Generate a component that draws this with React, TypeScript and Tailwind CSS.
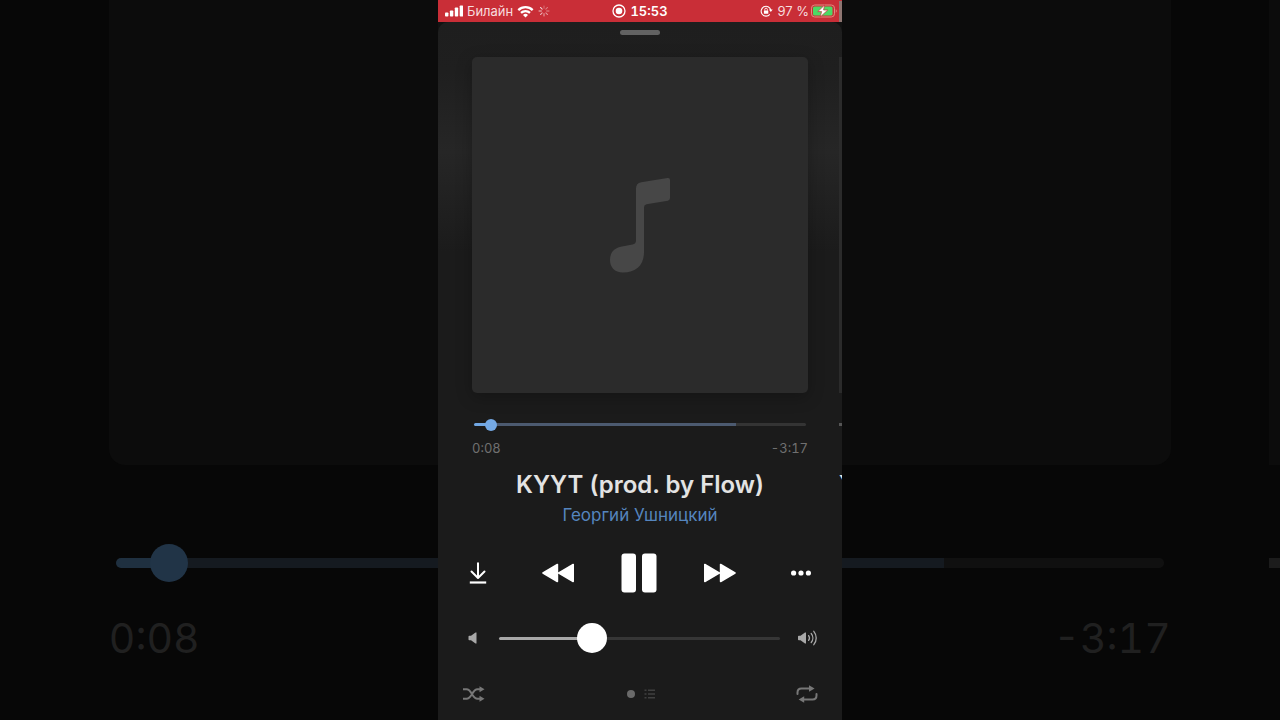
import { useState } from 'react'

const bars = [4, 6, 9, 11]
const spokes = [0, 45, 90, 135, 180, 225, 270, 315]

function StatusBar() {
  return (
    <header className="grid h-[22px] shrink-0 grid-cols-[1fr_auto_1fr] items-center bg-[#c92e37] pl-[7px] text-[13px] leading-4 text-white">
      <div className="flex items-center gap-1">
        <svg width="18" height="12" viewBox="0 0 18 12" fill="currentColor">
          {bars.map((h, i) => (
            <rect key={h} x={i * 4.9} y={11.5 - h} width="3.4" height={h} rx="0.8" />
          ))}
        </svg>
        <span className="text-[#f7dcde]">Билайн</span>
        <svg width="17" height="13" viewBox="0 0 17 13" fill="none" stroke="currentColor" strokeWidth="2.2">
          <path d="M1.3 5.1a10.2 10.2 0 0 1 14.4 0" />
          <path d="M4 7.9a6.4 6.4 0 0 1 9 0" />
          <path d="M8.5 12.4 6 9.9a3.6 3.6 0 0 1 5 0z" fill="currentColor" stroke="none" />
        </svg>
        <svg width="12" height="12" viewBox="0 0 12 12" stroke="currentColor" strokeWidth="1" strokeLinecap="round">
          {spokes.map((deg, i) => (
            <path key={deg} d="M6 1v2.4" transform={`rotate(${deg} 6 6)`} opacity={0.3 + i * 0.07} />
          ))}
        </svg>
      </div>

      <div className="flex items-center gap-1 pr-[7px] font-semibold">
        <svg width="14" height="14" viewBox="0 0 14 14">
          <circle cx="7" cy="7" r="6" fill="none" stroke="currentColor" strokeWidth="1.3" />
          <circle cx="7" cy="7" r="3.3" fill="currentColor" />
        </svg>
        <span className="tabular-nums">15:53</span>
      </div>

      <div className="flex items-center justify-end">
        <svg className="mr-1" width="13" height="12" viewBox="0 0 13 12" fill="none" stroke="currentColor">
          <path d="M9.8 9.4A4.9 4.9 0 1 1 10.8 5" strokeWidth="1.1" />
          <path d="M8.9 4.6h3.8l-1.9 2.5z" fill="currentColor" stroke="none" />
          <rect x="3.9" y="5.4" width="4.4" height="3.3" rx="0.5" fill="currentColor" stroke="none" />
          <path d="M4.8 5.6V4.5a1.3 1.3 0 0 1 2.6 0v1.1" strokeWidth="0.9" />
        </svg>
        <span className="mr-[2px] text-[#f7dcde]">97 %</span>
        <svg width="26" height="14" viewBox="0 0 26 14">
          <rect x="0.5" y="1" width="23" height="12" rx="3.2" fill="none" stroke="#e38a80" />
          <rect x="2" y="2.5" width="19.5" height="9" rx="1.6" fill="#4cd964" />
          <path d="M24.8 5.3v3.4a2 2 0 0 0 0-3.4z" fill="#e38a80" />
          <path d="M13.600 1 6.800 7.600h3.800L9.200 13 16.800 6h-4.200z" fill="#fff" stroke="#c92e37" strokeWidth="0.7" />
        </svg>
        <div className="ml-[2px] h-[21px] w-[3px] bg-[#8f7672]" />
      </div>
    </header>
  )
}

// The dimmed, enlarged player behind the phone
function Backdrop() {
  return (
    <div aria-hidden="true" className="col-start-1 row-start-1 flex gap-[98px] overflow-hidden pl-[8.5%]">
      <div className="w-[91%] max-w-[1062px] shrink-0">
        <div className="h-[465px] rounded-b-2xl bg-[#0c0c0c]" />
        <div className="px-[7px] pt-[93px]">
          <input
            type="range"
            tabIndex={-1}
            readOnly
            step="any"
            value={3.4}
            aria-label="Backdrop position"
            className="block h-[10px] w-full appearance-none rounded-full bg-[linear-gradient(to_right,#1f3040_5%,#151a20_5%,#151a20_79%,#101010_79%)] [&::-webkit-slider-thumb]:size-[38px] [&::-webkit-slider-thumb]:appearance-none [&::-webkit-slider-thumb]:rounded-full [&::-webkit-slider-thumb]:bg-[#213447]"
          />
        </div>
        <div className="flex justify-between pt-[46px] text-[41px] leading-[48px] text-[#202020] tabular-nums">
          <span>0:08</span>
          <span>-3:17</span>
        </div>
      </div>
      <div className="w-full shrink-0">
        <div className="h-[465px] bg-[#0c0c0c]" />
        <div className="mt-[93px] h-[10px] bg-[#1c1c1c]" />
      </div>
    </div>
  )
}

function Track() {
  const [position, setPosition] = useState(3.4)

  return (
    <section className="w-[336px] shrink-0">
      <div className="flex h-[336px] items-center justify-center rounded-[5px] bg-[#2b2b2b] shadow-[0_4px_16px_rgba(0,0,0,0.25)]">
        <svg width="62" height="96" viewBox="0 0 62 96" fill="#474747">
          <path d="M27 11.500q0-5.200 5.200-6.300L58.500 1Q61 .7 61 3V21q0 2.200-2.200 2.700L37.500 27.300q-2.500.5-2.500 3V75C35 88.500 27 95.500 14 95.500 5.500 95.500 1 90 1 83 1 75.500 5 71 13 69.500L23.500 67.500Q27 67 27 63.500Z" />
        </svg>
      </div>
      <div className="px-[2px] pt-[30px]">
        <input
          type="range"
          step="any"
          aria-label="Track position"
          value={position}
          onChange={(e) => setPosition(Number(e.target.value))}
          className="block h-[3px] w-full appearance-none rounded-full bg-[linear-gradient(to_right,#71a7e3_5%,#4c5a70_5%,#4c5a70_79%,#343434_79%)] [&::-webkit-slider-thumb]:size-3 [&::-webkit-slider-thumb]:appearance-none [&::-webkit-slider-thumb]:rounded-full [&::-webkit-slider-thumb]:bg-[#75aae6]"
        />
      </div>
      <div className="flex justify-between pt-[13px] text-[13px] leading-[18px] text-[#707070] tabular-nums">
        <span>0:08</span>
        <span>-3:17</span>
      </div>
      <h1 className="pt-3 text-center text-[24px] leading-8 font-semibold text-[#e3e3e3]">KYYT (prod. by Flow)</h1>
      <p className="pt-[2px] text-center text-[17px] leading-6 text-[#5585be]">
        <a href="#artist">Георгий Ушницкий</a>
      </p>
    </section>
  )
}

// Only the left edge of the following track shows at the side of the screen
function NextTrack() {
  return (
    <section className="w-[336px] shrink-0">
      <div className="h-[336px] bg-[#2b2b2b]" />
      <div className="mt-[30px] h-[3px] bg-[#555555]" />
      <h2 className="pt-[43px] text-[24px] leading-8 font-semibold text-[#e3e3e3]">Y</h2>
    </section>
  )
}

function Controls() {
  const [playing, setPlaying] = useState(true)

  return (
    <div className="flex h-10 items-center justify-between px-[31px] text-white">
      <button aria-label="Download">
        <svg width="18" height="22" viewBox="0 0 18 22" fill="none" stroke="currentColor" strokeWidth="2" strokeLinecap="round" strokeLinejoin="round">
          <path d="M9 1.200v14.500M2.500 9.500 9 16l6.500-6.500" />
          <path d="M0.800 20.500h16.400" strokeWidth="2.200" strokeLinecap="butt" />
        </svg>
      </button>
      <div className="flex items-center gap-[47px]">
        <button aria-label="Previous">
          <svg width="32" height="20" viewBox="0 0 32 20" fill="currentColor" stroke="currentColor" strokeWidth="1.6" strokeLinejoin="round">
            <path d="M1 10 15.400 1.500v17zM16.800 10 31.200 1.500v17z" />
          </svg>
        </button>
        <button aria-label={playing ? 'Pause' : 'Play'} onClick={() => setPlaying(!playing)}>
          <svg width="36" height="40" viewBox="0 0 36 40" fill="currentColor">
            {playing ? (
              <>
                <rect x="0.500" y="0.500" width="14.500" height="39" rx="3" />
                <rect x="21" y="0.500" width="14.500" height="39" rx="3" />
              </>
            ) : (
              <path d="M3 1 34 20 3 39z" />
            )}
          </svg>
        </button>
        <button aria-label="Next">
          <svg width="32" height="20" viewBox="0 0 32 20" fill="currentColor" stroke="currentColor" strokeWidth="1.6" strokeLinejoin="round">
            <path d="M31 10 16.600 1.500v17zM15.200 10 .800 1.500v17z" />
          </svg>
        </button>
      </div>
      <button aria-label="More">
        <svg width="20" height="6" viewBox="0 0 20 6" fill="currentColor">
          <circle cx="2.600" cy="3" r="2.600" />
          <circle cx="10" cy="3" r="2.600" />
          <circle cx="17.400" cy="3" r="2.600" />
        </svg>
      </button>
    </div>
  )
}

function Volume() {
  const [volume, setVolume] = useState(31)

  return (
    <div className="mt-[30px] flex h-[30px] items-center pr-6 pl-[30px] text-[#a8a8a8]">
      <svg className="mr-[22px] shrink-0" width="9" height="12" viewBox="0 0 9 12" fill="currentColor">
        <path d="M0.500 4.500q0-.8.8-.8H3L7.500.5h1v11h-1L3 8.300H1.300q-.8 0-.8-.8z" />
      </svg>
      <input
        type="range"
        aria-label="Volume"
        value={volume}
        onChange={(e) => setVolume(Number(e.target.value))}
        className="block h-[3px] min-w-0 flex-1 appearance-none rounded-full bg-[linear-gradient(to_right,#a8a8a8_33%,#363636_33%)] [&::-webkit-slider-thumb]:size-[30px] [&::-webkit-slider-thumb]:appearance-none [&::-webkit-slider-thumb]:rounded-full [&::-webkit-slider-thumb]:bg-white"
      />
      <svg className="ml-[18px] shrink-0" width="20" height="16" viewBox="0 0 20 16" fill="none" stroke="currentColor" strokeLinecap="round">
        <path d="M0 6.500q0-.8.8-.8H2.500L7 2.500h1v11H7L2.500 10.300H.8q-.8 0-.8-.8z" fill="currentColor" stroke="none" />
        <path d="M10.600 5.600a4 4 0 0 1 0 4.800M13.200 3.500a7 7 0 0 1 0 9M15.800 1.300a10.500 10.500 0 0 1 0 13.400" strokeWidth="1.300" />
      </svg>
    </div>
  )
}

function Footer() {
  return (
    <footer className="mt-[31px] flex h-5 items-center justify-between px-6 text-[#777777]">
      <button aria-label="Shuffle">
        <svg width="23" height="16" viewBox="0 0 23 16" fill="none" stroke="currentColor" strokeWidth="2" strokeLinejoin="round">
          <path d="M1 3.200h3.500C10 3.200 10 12.800 15.500 12.800H18M1 12.800h3.500C10 12.800 10 3.200 15.500 3.200H18" />
          <path d="M17.500.2 22.500 3.200 17.500 6.200zM17.500 9.800l5 3-5 3z" fill="currentColor" stroke="none" />
        </svg>
      </button>
      <div className="flex items-center gap-[9px]">
        <span className="size-2 rounded-full bg-[#6a6a6a]" />
        <svg width="11" height="10" viewBox="0 0 11 10" stroke="#404040" strokeWidth="1.500">
          <path d="M0.500 1.200h2M4 1.200h7M0.500 5h2M4 5h7M0.500 8.800h2M4 8.800h7" />
        </svg>
      </div>
      <button aria-label="Repeat">
        <svg width="22" height="18" viewBox="0 0 22 18" fill="none" stroke="currentColor" strokeWidth="2" strokeLinecap="round">
          <path d="M1.500 9V7.500q0-4 4-4H13M20.500 9v1.500q0 4-4 4H8" />
          <path d="M13 .2 18.600 3.500 13 6.800zM8.200 11.200 2.600 14.500l5.600 3.300z" fill="currentColor" stroke="none" />
        </svg>
      </button>
    </footer>
  )
}

export default function App() {
  return (
    <main className="grid min-h-screen grid-cols-1 overflow-hidden bg-[#070707] font-[Inter,sans-serif]">
      <Backdrop />

      <div className="z-10 col-start-1 row-start-1 flex w-[404px] max-w-full flex-col justify-self-center overflow-hidden bg-[#121212]">
        <StatusBar />
        <div className="flex-1 overflow-hidden rounded-t-[10px] bg-[#1b1b1b] bg-[linear-gradient(to_bottom,#1e1e1e_0px,#1f1f1f_50px,#262626_130px,#1b1b1b_230px)] pt-2">
          <div className="mx-auto h-[5px] w-10 rounded-full bg-[#626262]" />
          <div className="mt-[22px] flex gap-[31px] overflow-x-clip pl-[34px]">
            <Track />
            <NextTrack />
          </div>
          <div className="pt-[26px]">
            <Controls />
            <Volume />
            <Footer />
          </div>
        </div>
      </div>
    </main>
  )
}
